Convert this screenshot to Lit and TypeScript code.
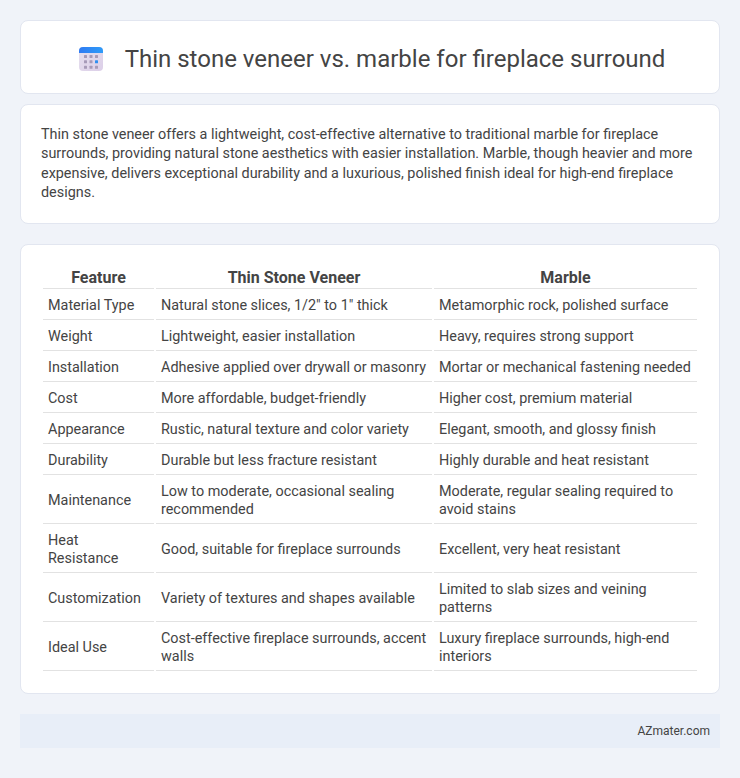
import { LitElement, html, css, svg } from "lit";
import { customElement } from "lit/decorators.js";

const rows: string[][] = [
  ["Material Type", 'Natural stone slices, 1/2" to 1" thick', "Metamorphic rock, polished surface"],
  ["Weight", "Lightweight, easier installation", "Heavy, requires strong support"],
  ["Installation", "Adhesive applied over drywall or masonry", "Mortar or mechanical fastening needed"],
  ["Cost", "More affordable, budget-friendly", "Higher cost, premium material"],
  ["Appearance", "Rustic, natural texture and color variety", "Elegant, smooth, and glossy finish"],
  ["Durability", "Durable but less fracture resistant", "Highly durable and heat resistant"],
  ["Maintenance", "Low to moderate, occasional sealing recommended", "Moderate, regular sealing required to avoid stains"],
  ["Heat Resistance", "Good, suitable for fireplace surrounds", "Excellent, very heat resistant"],
  ["Customization", "Variety of textures and shapes available", "Limited to slab sizes and veining patterns"],
  ["Ideal Use", "Cost-effective fireplace surrounds, accent walls", "Luxury fireplace surrounds, high-end interiors"],
];

@customElement("app-root")
export class AppRoot extends LitElement {
  static styles = css`
    :host {
      display: block;
      background: #f0f3f9;
      min-height: 778px;
      box-sizing: border-box;
      padding: 20px;
      font-family: Roboto, sans-serif;
      color: #444;
    }
    .card {
      background: #fff;
      border: 1px solid #e2e6f0;
      border-radius: 8px;
      box-sizing: border-box;
    }
    .head {
      height: 74px;
      padding: 4px 0 0 2px;
      display: flex;
      align-items: center;
      justify-content: center;
      gap: 20px;
      margin-bottom: 10px;
    }
    .head svg.ico { display: block; padding: 0 2px; }
    h1 {
      margin: 0;
      font-size: 24px;
      font-weight: 400;
      color: #444;
    }
    .intro {
      height: 120px;
      padding: 20px;
      margin-bottom: 20px;
      font-size: 14.4px;
      line-height: 19.44px;
    }
    .intro p { margin: 0; }
    .tbl {
      height: 450px;
      padding: 20px;
      margin-bottom: 20px;
    }
    table {
      width: 100%;
      table-layout: fixed;
      border-collapse: separate;
      border-spacing: 2px;
      font-size: 14.4px;
      line-height: 18px;
    }
    th {
      font-size: 16px;
      font-weight: 700;
      text-align: center;
      padding: 2px 5px 1px;
      border-bottom: 1px solid #e2e2e2;
    }
    td {
      padding: 6px 5px 4px;
      border-bottom: 1px solid #e2e2e2;
    }
    .c1 { width: 101px; }
    .c2 { width: 266px; }
    .foot {
      height: 34px;
      background: #e8eef8;
      display: flex;
      align-items: center;
      justify-content: flex-end;
      padding-right: 10px;
      font-size: 12px;
    }
  `;

  render() {
    return html`
      <div class="card head">
        <svg class="ico" width="24" height="24" viewBox="0 0 24 24">
          <defs>
            <linearGradient id="t" x1="0" y1="0" x2="1" y2="0">
              <stop offset="0" stop-color="#2f7bf2" />
              <stop offset="1" stop-color="#2f9bf8" />
            </linearGradient>
            <linearGradient id="b" x1="0" y1="0" x2="1" y2="1">
              <stop offset="0" stop-color="#e6e0ee" />
              <stop offset="1" stop-color="#dccfe8" />
            </linearGradient>
          </defs>
          <rect x="0" y="0" width="24" height="24" rx="4" fill="url(#b)" />
          <path d="M0 6V4a4 4 0 0 1 4-4h16a4 4 0 0 1 4 4v2z" fill="url(#t)" />
          ${[0, 1, 2].flatMap((r) =>
            [0, 1, 2].map(
              (c) => svg`<rect x=${5 + c * 5.5} y=${8 + r * 5.35} width="3" height="3" rx=".5" fill=${r === 1 && c === 2 ? "#2f8ff0" : "#a79bb8"} />`
            )
          )}
        </svg>
        <h1>Thin stone veneer vs. marble for fireplace surround</h1>
      </div>
      <div class="card intro">
        <p>Thin stone veneer offers a lightweight, cost-effective alternative to traditional marble for fireplace surrounds, providing natural stone aesthetics with easier installation. Marble, though heavier and more expensive, delivers exceptional durability and a luxurious, polished finish ideal for high-end fireplace designs.</p>
      </div>
      <div class="card tbl">
        <table>
          <thead>
            <tr><th class="c1">Feature</th><th class="c2">Thin Stone Veneer</th><th>Marble</th></tr>
          </thead>
          <tbody>
            ${rows.map((r) => html`<tr><td>${r[0]}</td><td>${r[1]}</td><td>${r[2]}</td></tr>`)}
          </tbody>
        </table>
      </div>
      <div class="foot">AZmater.com</div>
    `;
  }
}
